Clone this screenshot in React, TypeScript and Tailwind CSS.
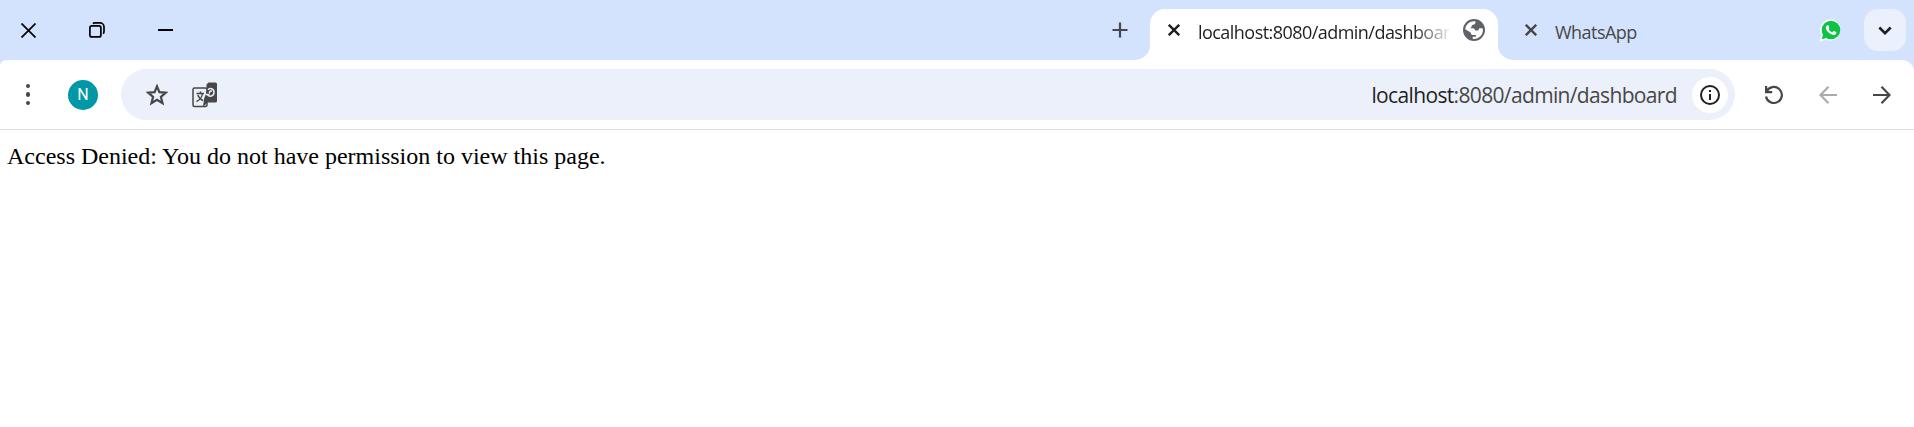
import React from 'react';

const TabClose = ({ className }: { className: string }) => (
  <svg className={className} width="12" height="12" viewBox="0 0 12 12" fill="none" stroke="currentColor" strokeWidth="2.4">
    <path d="M0.8 0.8 11.2 11.2M11.2 0.8 0.8 11.2" />
  </svg>
);

const WindowControls = () => (
  <div className="flex items-center text-black">
    <svg className="ml-[21px]" width="15" height="15" viewBox="0 0 15 15" fill="none" stroke="currentColor" strokeWidth="1.7">
      <path d="M0.5 0.5 14.5 14.5M14.5 0.5 0.5 14.5" />
    </svg>
    <svg className="ml-[53px]" width="16" height="16" viewBox="0 0 16 16" fill="none" stroke="currentColor" strokeWidth="1.7">
      <rect x="0.9" y="3.9" width="11" height="11" rx="2" />
      <path d="M3.8 1.5C4.5 1 5 0.9 6 0.9H11a4 4 0 0 1 4 4V9.500c0 1-.3 1.700-.8 2.300" />
    </svg>
    <div className="ml-[53px] h-[2px] w-[15px] bg-black" />
  </div>
);

const Globe = () => (
  <svg width="22" height="22" viewBox="0 0 22 22">
    <circle cx="11" cy="11" r="11" fill="#5f6368" />
    <path d="M12.300 2.300c.5 1.500 0 2.600-1.300 3.200-1.200.5-2.400.5-2.400 1.800 0 1.300-.9 1.800-2.100 2H9.800c1.700 0 2.200.9 2.300 2.300h2c1.500 0 1.900-.9 1.900-2.200 1.300-.2 2.500-.1 3.800.2A8.900 8.900 0 0 1 9.700 19.800v-2.100h2.200c1 0 1.300-.8 1.300-1.800H10c-1.500 0-2.300-.9-2.300-2.300L2.200 10.200A8.900 8.900 0 0 1 12.300 2.300z" fill="#fff" />
  </svg>
);

const WhatsAppMark = () => (
  <svg width="23" height="23" viewBox="0 0 23 23">
    <path d="M12 .5A10.500 10.500 0 0 0 2.400 16L.5 22.500 7 20.700A10.500 10.500 0 1 0 12 .5z" fill="#fff" />
    <circle cx="12" cy="11" r="9.300" fill="#0ec244" />
    <path d="M4.100 15.500 2.700 20.200 7.500 19z" fill="#0ec244" />
    <path d="M8.300 6.200c.5-.2 1-.1 1.200.4l.8 1.900c.1.400 0 .7-.8 1.600.9 1.700 2 2.700 3.700 3.400l1.100-1.200c.3-.3.5-.3.800-.2l1.900.9c.4.200.5.500.4 1-.3 1.500-1.700 2.100-3 1.900-3.700-.6-6.900-3.700-7.500-6.700-.2-1.300.5-2.600 1.400-3z" fill="#fff" />
  </svg>
);

const TabStrip = () => (
  <header className="flex h-[60px] bg-[#d3e2fd]">
    <div className="flex w-[1112px] items-center">
      <WindowControls />
    </div>
    <div className="flex w-[23px] items-center">
      <svg width="16" height="16" viewBox="0 0 16 16" stroke="#474747" strokeWidth="2.2">
        <path d="M8 .5V15.500M.5 8H15.500" />
      </svg>
    </div>
    <svg className="mt-[45px]" width="15" height="15" viewBox="0 0 15 15">
      <path d="M15 0A15 15 0 0 1 0 15H15z" fill="#fff" />
    </svg>
    <div className="flex h-[51px] w-[348px] items-center self-end rounded-t-[15px] bg-white pb-[9px] pl-[18px]">
      <TabClose className="text-[#1f1f1f]" />
      <div className="mt-[3px] ml-[18px] w-[251px] overflow-hidden whitespace-nowrap font-['Open_Sans',sans-serif] text-[18px] leading-[26px] tracking-[-0.54px] text-[#1f1f1f] [mask-image:linear-gradient(to_right,black_215px,transparent_255px)]">
        localhost:8080/admin/dashboard
      </div>
      <div className="ml-[14px]"><Globe /></div>
    </div>
    <svg className="mt-[45px]" width="15" height="15" viewBox="0 0 15 15">
      <path d="M0 0A15 15 0 0 0 15 15H0z" fill="#fff" />
    </svg>
    <div className="flex h-[60px] w-[351px] items-center pl-[12px]">
      <TabClose className="text-[#474747]" />
      <div className="mt-[3px] ml-[18px] font-['Open_Sans',sans-serif] text-[18px] leading-[26px] tracking-[-0.54px] text-[#474747]">WhatsApp</div>
      <div className="mr-[22px] ml-auto"><WhatsAppMark /></div>
    </div>
    <div className="mt-[9px] flex size-[42px] items-center justify-center rounded-[14px] bg-[#eaf1fd]">
      <svg width="14" height="9" viewBox="0 0 14 9" fill="none" stroke="#1f1f1f" strokeWidth="2.6">
        <path d="M1.300 1.500 7 7.100 12.700 1.500" />
      </svg>
    </div>
  </header>
);

const Toolbar = () => (
  <div className="bg-[#d3e2fd]">
    <div className="flex h-[70px] items-center rounded-tl-[6px] rounded-tr-[12px] border-b border-[#dfe0e2] bg-white">
      <div className="ml-[26px] flex w-[4px] flex-col gap-[4px]">
        <i className="size-[4.4px] rounded-full bg-[#474747]" />
        <i className="size-[4.4px] rounded-full bg-[#474747]" />
        <i className="size-[4.4px] rounded-full bg-[#474747]" />
      </div>
      <div className="ml-[38px] flex size-[30px] items-center justify-center rounded-full bg-[#0097a7] pt-[1px] font-[Roboto,sans-serif] text-[16px] text-white">N</div>
      <div className="ml-[23px] flex h-[51px] w-[1614px] items-center rounded-full bg-[#ebf0fa] pl-[25px]">
        <svg width="22" height="22" viewBox="0 0 22 22" fill="none" stroke="#474747" strokeWidth="2.200">
          <path d="M11 2.300 13.400 8.200 19.800 8.700 14.900 12.800 16.500 19.200 11 15.700 5.500 19.200 7.100 12.800 2.200 8.700 8.600 8.200z" />
        </svg>
        <svg className="ml-[24px]" width="25" height="26" viewBox="0 0 25 26" fill="none">
          <rect x="1" y="6" width="14" height="18.500" rx="1.500" stroke="#474747" strokeWidth="1.500" />
          <path d="M4.500 11.500H12M8.500 9.500V11.500M4.500 19.500C8 18 10 15 10.500 11.500M5.800 13C7 16 8.500 17.500 11 18.500" stroke="#474747" strokeWidth="1.400" />
          <path d="M16.500 .5h7a1.500 1.500 0 0 1 1.500 1.500v17a1.500 1.500 0 0 1-1.500 1.500H15.500l-4.500 4.500 1-8 2.500-7V2.500z" fill="#474747" />
          <path d="M13.500 12.500H17.500M16 7.800c1.800-2.300 6-1.300 6 2.500 0 4.200-4.800 5-6.500 2.500M20 9.300c-2.200-.8-3 .8-2.200 2" stroke="#ebf0fa" strokeWidth="1.500" />
        </svg>
        <div className="mr-[15px] ml-auto whitespace-nowrap font-['Open_Sans',sans-serif] text-[21px] leading-[30px] tracking-[-0.65px] text-[#474747]">
          <span className="text-[#1f1f1f]">localhost</span>:8080/admin/dashboard
        </div>
        <div className="mr-[7px] flex size-[36px] items-center justify-center rounded-full bg-white">
          <svg width="20" height="20" viewBox="0 0 20 20" fill="none" stroke="#1f1f1f" strokeWidth="2">
            <circle cx="10" cy="10" r="9" />
            <path d="M10 9V15M10 5V7" />
          </svg>
        </div>
      </div>
      <svg className="ml-[29px]" width="20" height="20" viewBox="0 0 20 20" fill="none" stroke="#474747" strokeWidth="2.200">
        <path d="M2.100 1V7.100H8.200M2.500 6.800A8 8 0 1 1 2 11.500" />
      </svg>
      <svg className="ml-[35px]" width="18" height="18" viewBox="0 0 18 18" fill="none" stroke="#ababab" strokeWidth="2.200">
        <path d="M18 9H1.500M9.500 .8 1.500 9 9.500 17.200" />
      </svg>
      <svg className="ml-[36px]" width="18" height="18" viewBox="0 0 18 18" fill="none" stroke="#474747" strokeWidth="2.200">
        <path d="M0 9H16.500M8.500 .8 16.500 9 8.500 17.200" />
      </svg>
    </div>
  </div>
);

export default function App() {
  return (
    <div className="flex h-[427px] w-[1914px] flex-col overflow-hidden bg-white">
      <TabStrip />
      <Toolbar />
      <main className="px-[7px] pt-[12px] font-['Liberation_Serif',serif] text-[24px] leading-[28px] text-black">
        Access Denied: You do not have permission to view this page.
      </main>
    </div>
  );
}
